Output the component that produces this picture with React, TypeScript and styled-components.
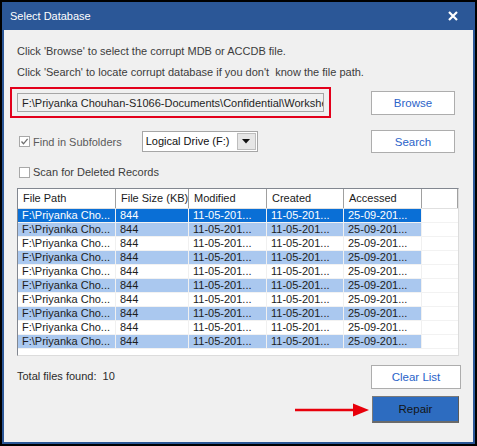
import styled, { createGlobalStyle } from "styled-components";

const GlobalStyle = createGlobalStyle`
  html, body {
    margin: 0;
    padding: 0;
    background: #ffffff;
  }
  body {
    font-family: "Liberation Sans", Arial, sans-serif;
    font-size: 11px;
    color: #333333;
  }
`;

const Frame = styled.div`
  width: 477px;
  height: 446px;
  box-sizing: border-box;
  border: 2px solid #000000;
  display: flex;
  flex-direction: column;
  background: #2b5797;
`;

const TitleBar = styled.div`
  height: 28px;
  display: flex;
  align-items: center;
  justify-content: space-between;
  padding: 0 17px 0 8px;
  color: #ffffff;
  font-size: 11px;
`;

const CloseButton = styled.svg`
  width: 10px;
  height: 10px;
`;

const Body = styled.div`
  flex: 1;
  margin: 0 2px 2px 2px;
  background: #f0f0f0;
  padding: 11px 12px 0 13px;
  display: flex;
  flex-direction: column;
`;

const Hint = styled.div`
  line-height: 21px;
  height: 21px;
  color: #3c3c3c;
  white-space: nowrap;
`;

const Row = styled.div<{ $top: number }>`
  display: flex;
  align-items: center;
  justify-content: space-between;
  margin-top: ${(p) => p.$top}px;
`;

const Highlight = styled.div`
  margin-left: -7px;
  width: 321px;
  height: 31px;
  box-sizing: border-box;
  border: 2px solid #e3001b;
  padding: 4px 5px;
`;

const PathInput = styled.div`
  height: 100%;
  box-sizing: border-box;
  border: 1px solid #a6a6a6;
  background: #f0f0f0;
  padding: 0 4px;
  line-height: 19px;
  overflow: hidden;
  white-space: nowrap;
  color: #1f1f1f;
`;

const Button = styled.button<{ $w: number; $h: number; $right: number }>`
  width: ${(p) => p.$w}px;
  height: ${(p) => p.$h}px;
  margin-right: ${(p) => p.$right}px;
  background: #ffffff;
  border: 1px solid #adadad;
  color: #2a63c9;
  font-family: inherit;
  font-size: 11.5px;
  padding: 0;
`;

const PrimaryButton = styled.button`
  width: 87px;
  height: 27px;
  margin-right: 2px;
  background: #2d6cc0;
  border: 1px solid #7a7a7a;
  border-right-color: #5a5a5a;
  border-bottom: 2px solid #6a6a6a;
  color: #141414;
  font-family: inherit;
  font-size: 11.5px;
  padding: 0;
`;

const Left = styled.div`
  display: flex;
  align-items: center;
`;

const Check = styled.label<{ $muted?: boolean }>`
  display: flex;
  align-items: center;
  gap: 3px;
  margin-left: 2px;
  color: ${(p) => (p.$muted ? "#5a5a5a" : "#3c3c3c")};
  white-space: nowrap;
`;

const Box = styled.span`
  width: 11px;
  height: 11px;
  box-sizing: border-box;
  border: 1px solid #a8a8a8;
  background: #ffffff;
  display: flex;
  align-items: center;
  justify-content: center;
`;

const Select = styled.div`
  margin-left: 20px;
  width: 116px;
  height: 21px;
  box-sizing: border-box;
  border: 1px solid #a6a6a6;
  background: #ffffff;
  display: flex;
  align-items: stretch;
`;

const SelectText = styled.span`
  flex: 1;
  padding-left: 3px;
  line-height: 19px;
  color: #111111;
  font-size: 11px;
  white-space: nowrap;
  overflow: hidden;
`;

const SelectArrow = styled.span`
  width: 17px;
  margin: 1px;
  background: #e6e6e6;
  border: 1px solid #bdbdbd;
  display: flex;
  align-items: center;
  justify-content: center;
`;

const List = styled.div`
  margin-top: 10px;
  width: 442px;
  height: 168px;
  box-sizing: border-box;
  border: 1px solid #828790;
  border-right-color: #dcdcdc;
  border-bottom-color: #dcdcdc;
  background: #ffffff;
  overflow: hidden;
`;

const cols = "98px 73px 78px 77px 78px 1fr";

const Header = styled.div`
  display: grid;
  grid-template-columns: ${cols};
  height: 19px;
  border-bottom: 1px solid #e0e0e0;
`;

const HeadCell = styled.div`
  line-height: 19px;
  padding-left: 5px;
  border-right: 1px solid #a0a0a0;
  color: #1a1a1a;
  white-space: nowrap;
  overflow: hidden;
`;

const DataRow = styled.div`
  display: grid;
  grid-template-columns: ${cols};
  height: 14px;
  border-bottom: 1px solid #f2f2f2;
  box-sizing: border-box;
`;

const Cell = styled.div<{ $tone: "sel" | "alt" | "plain" | "blank" }>`
  line-height: 13px;
  padding-left: 4px;
  white-space: nowrap;
  overflow: hidden;
  border-right: 1px solid
    ${(p) => (p.$tone === "blank" ? "transparent" : "#f0f0f0")};
  background: ${(p) =>
    p.$tone === "sel" ? "#0a6fd6" : p.$tone === "alt" ? "#aac8ef" : "#ffffff"};
  color: ${(p) => (p.$tone === "sel" ? "#ffffff" : "#1c1c1c")};
`;

const Footer = styled.div`
  display: flex;
  align-items: center;
  justify-content: space-between;
  margin-top: 9px;
`;

const Total = styled.span`
  color: #2b2b2b;
  margin-top: -3px;
`;

const ActionRow = styled.div`
  display: flex;
  align-items: center;
  justify-content: flex-end;
  margin-top: 7px;
`;

const Arrow = styled.svg`
  width: 76px;
  height: 16px;
  margin-right: 1px;
`;

const rows = Array.from({ length: 10 }, (_, i) => i);
const values = [
  "F:\\Priyanka Cho...",
  "844",
  "11-05-201...",
  "11-05-201...",
  "25-09-201...",
];

function Tick() {
  return (
    <svg width="9" height="9" viewBox="0 0 9 9">
      <path d="M1.5 4.5 L3.5 6.8 L7.6 1.8" fill="none" stroke="#6f6f6f" strokeWidth="1.3" />
    </svg>
  );
}

export default function App() {
  return (
    <>
      <GlobalStyle />
      <Frame>
        <TitleBar>
          <span>Select Database</span>
          <CloseButton viewBox="0 0 10 10">
            <path d="M1 1 L9 9 M9 1 L1 9" stroke="#ffffff" strokeWidth="2.2" />
          </CloseButton>
        </TitleBar>
        <Body>
          <Hint>Click 'Browse' to select the corrupt MDB or ACCDB file.</Hint>
          <Hint>Click 'Search' to locate corrupt database if you don't&nbsp; know the file path.</Hint>
          <Row $top={4}>
            <Highlight>
              <PathInput>F:\Priyanka Chouhan-S1066-Documents\Confidential\Worksheets</PathInput>
            </Highlight>
            <Button $w={84} $h={24} $right={6}>Browse</Button>
          </Row>
          <Row $top={12}>
            <Left>
              <Check $muted>
                <Box><Tick /></Box>
                Find in Subfolders
              </Check>
              <Select>
                <SelectText>Logical Drive (F:)</SelectText>
                <SelectArrow>
                  <svg width="8" height="5" viewBox="0 0 8 5">
                    <path d="M0 0 H8 L4 4.5 Z" fill="#111111" />
                  </svg>
                </SelectArrow>
              </Select>
            </Left>
            <Button $w={84} $h={23} $right={6}>Search</Button>
          </Row>
          <Row $top={13}>
            <Check>
              <Box />
              Scan for Deleted Records
            </Check>
          </Row>
          <List>
            <Header>
              <HeadCell>File Path</HeadCell>
              <HeadCell>File Size (KB)</HeadCell>
              <HeadCell>Modified</HeadCell>
              <HeadCell>Created</HeadCell>
              <HeadCell>Accessed</HeadCell>
              <HeadCell />
            </Header>
            {rows.map((i) => {
              const tone = i === 0 ? "sel" : i % 2 === 1 ? "alt" : "plain";
              return (
                <DataRow key={i}>
                  {values.map((v, j) => (
                    <Cell key={j} $tone={tone}>{v}</Cell>
                  ))}
                  <Cell $tone="blank" />
                </DataRow>
              );
            })}
          </List>
          <Footer>
            <Total>Total files found:&nbsp; 10</Total>
            <Button $w={90} $h={24} $right={0}>Clear List</Button>
          </Footer>
          <ActionRow>
            <Arrow viewBox="0 0 76 16">
              <path d="M0 8 H60" stroke="#e8000b" strokeWidth="2.5" />
              <path d="M58 1.5 L74 8 L58 14.5 Z" fill="#e8000b" />
            </Arrow>
            <PrimaryButton>Repair</PrimaryButton>
          </ActionRow>
        </Body>
      </Frame>
    </>
  );
}
